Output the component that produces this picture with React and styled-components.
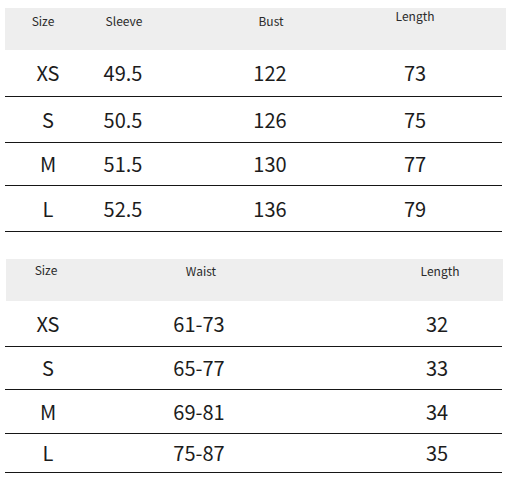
import React from "react";
import styled, { createGlobalStyle } from "styled-components";

const Global = createGlobalStyle`
  html, body { margin: 0; padding: 0; background: #ffffff; }
  body { font-family: "Noto Sans CJK SC", "Noto Sans", sans-serif; color: #1c1c1c; }
`;

const Page = styled.main`
  width: 507px;
  padding: 8px 0 0 5px;
  box-sizing: border-box;
  display: flex;
  flex-direction: column;
  gap: 27px;
`;

const Table = styled.section`
  display: flex;
  flex-direction: column;
  width: 501px;
`;

const HeadRow = styled.div`
  display: grid;
  grid-template-columns: ${(p) => p.$cols};
  height: 42px;
  background: #eeeeee;
  width: ${(p) => p.$w}px;
  margin-left: ${(p) => p.$x || 0}px;
`;

const HeadCell = styled.div`
  grid-column: ${(p) => p.$col};
  font-size: 12px;
  line-height: 16px;
  color: #2a2a2a;
  text-align: center;
  padding-top: ${(p) => p.$top}px;
  margin-left: ${(p) => p.$shift || 0}px;
`;

const Row = styled.div`
  display: grid;
  grid-template-columns: ${(p) => p.$cols};
  align-items: center;
  height: ${(p) => p.$h}px;
  box-sizing: border-box;
  border-bottom: 1.5px solid #161616;
  width: 497px;
`;

const Cell = styled.div`
  grid-column: ${(p) => p.$col};
  font-size: 20px;
  line-height: 24px;
  text-align: center;
  color: #1c1c1c;
  margin-left: ${(p) => p.$shift || 0}px;
`;

const top = {
  cols: "86px 64px 230px 60px 1fr",
  head: [
    { label: "Size", col: 1, top: 5, shift: -10 },
    { label: "Sleeve", col: 2, top: 5, shift: 2 },
    { label: "Bust", col: 3, top: 5, shift: 2 },
    { label: "Length", col: 4, top: -2 },
  ],
  headW: 501,
  headX: 0,
  colIdx: [1, 2, 3, 4],
  rows: [
    { h: 47, cells: ["XS", "49.5", "122", "73"] },
    { h: 46, cells: ["S", "50.5", "126", "75"] },
    { h: 43, cells: ["M", "51.5", "130", "77"] },
    { h: 46, cells: ["L", "52.5", "136", "79"] },
  ],
};

const bottom = {
  cols: "86px 216px 1fr 130px",
  head: [
    { label: "Size", col: 1, top: 3, shift: -6 },
    { label: "Waist", col: 2, top: 4, shift: 2 },
    { label: "Length", col: 4, top: 4, shift: 4 },
  ],
  headW: 497,
  headX: 1,
  colIdx: [1, 2, 4],
  rows: [
    { h: 46, cells: ["XS", "61-73", "32"] },
    { h: 43, cells: ["S", "65-77", "33"] },
    { h: 44, cells: ["M", "69-81", "34"] },
    { h: 39, cells: ["L", "75-87", "35"] },
  ],
};

function SizeTable({ data }) {
  return (
    <Table>
      <HeadRow $cols={data.cols} $w={data.headW} $x={data.headX}>
        {data.head.map((h) => (
          <HeadCell key={h.label} $col={h.col} $top={h.top} $shift={h.shift}>
            {h.label}
          </HeadCell>
        ))}
      </HeadRow>
      {data.rows.map((r, i) => (
        <Row key={i} $cols={data.cols} $h={r.h}>
          {r.cells.map((c, j) => (
            <Cell key={j} $col={data.colIdx[j]}>
              {c}
            </Cell>
          ))}
        </Row>
      ))}
    </Table>
  );
}

export default function App() {
  return (
    <>
      <Global />
      <Page>
        <SizeTable data={top} />
        <SizeTable data={bottom} />
      </Page>
    </>
  );
}
